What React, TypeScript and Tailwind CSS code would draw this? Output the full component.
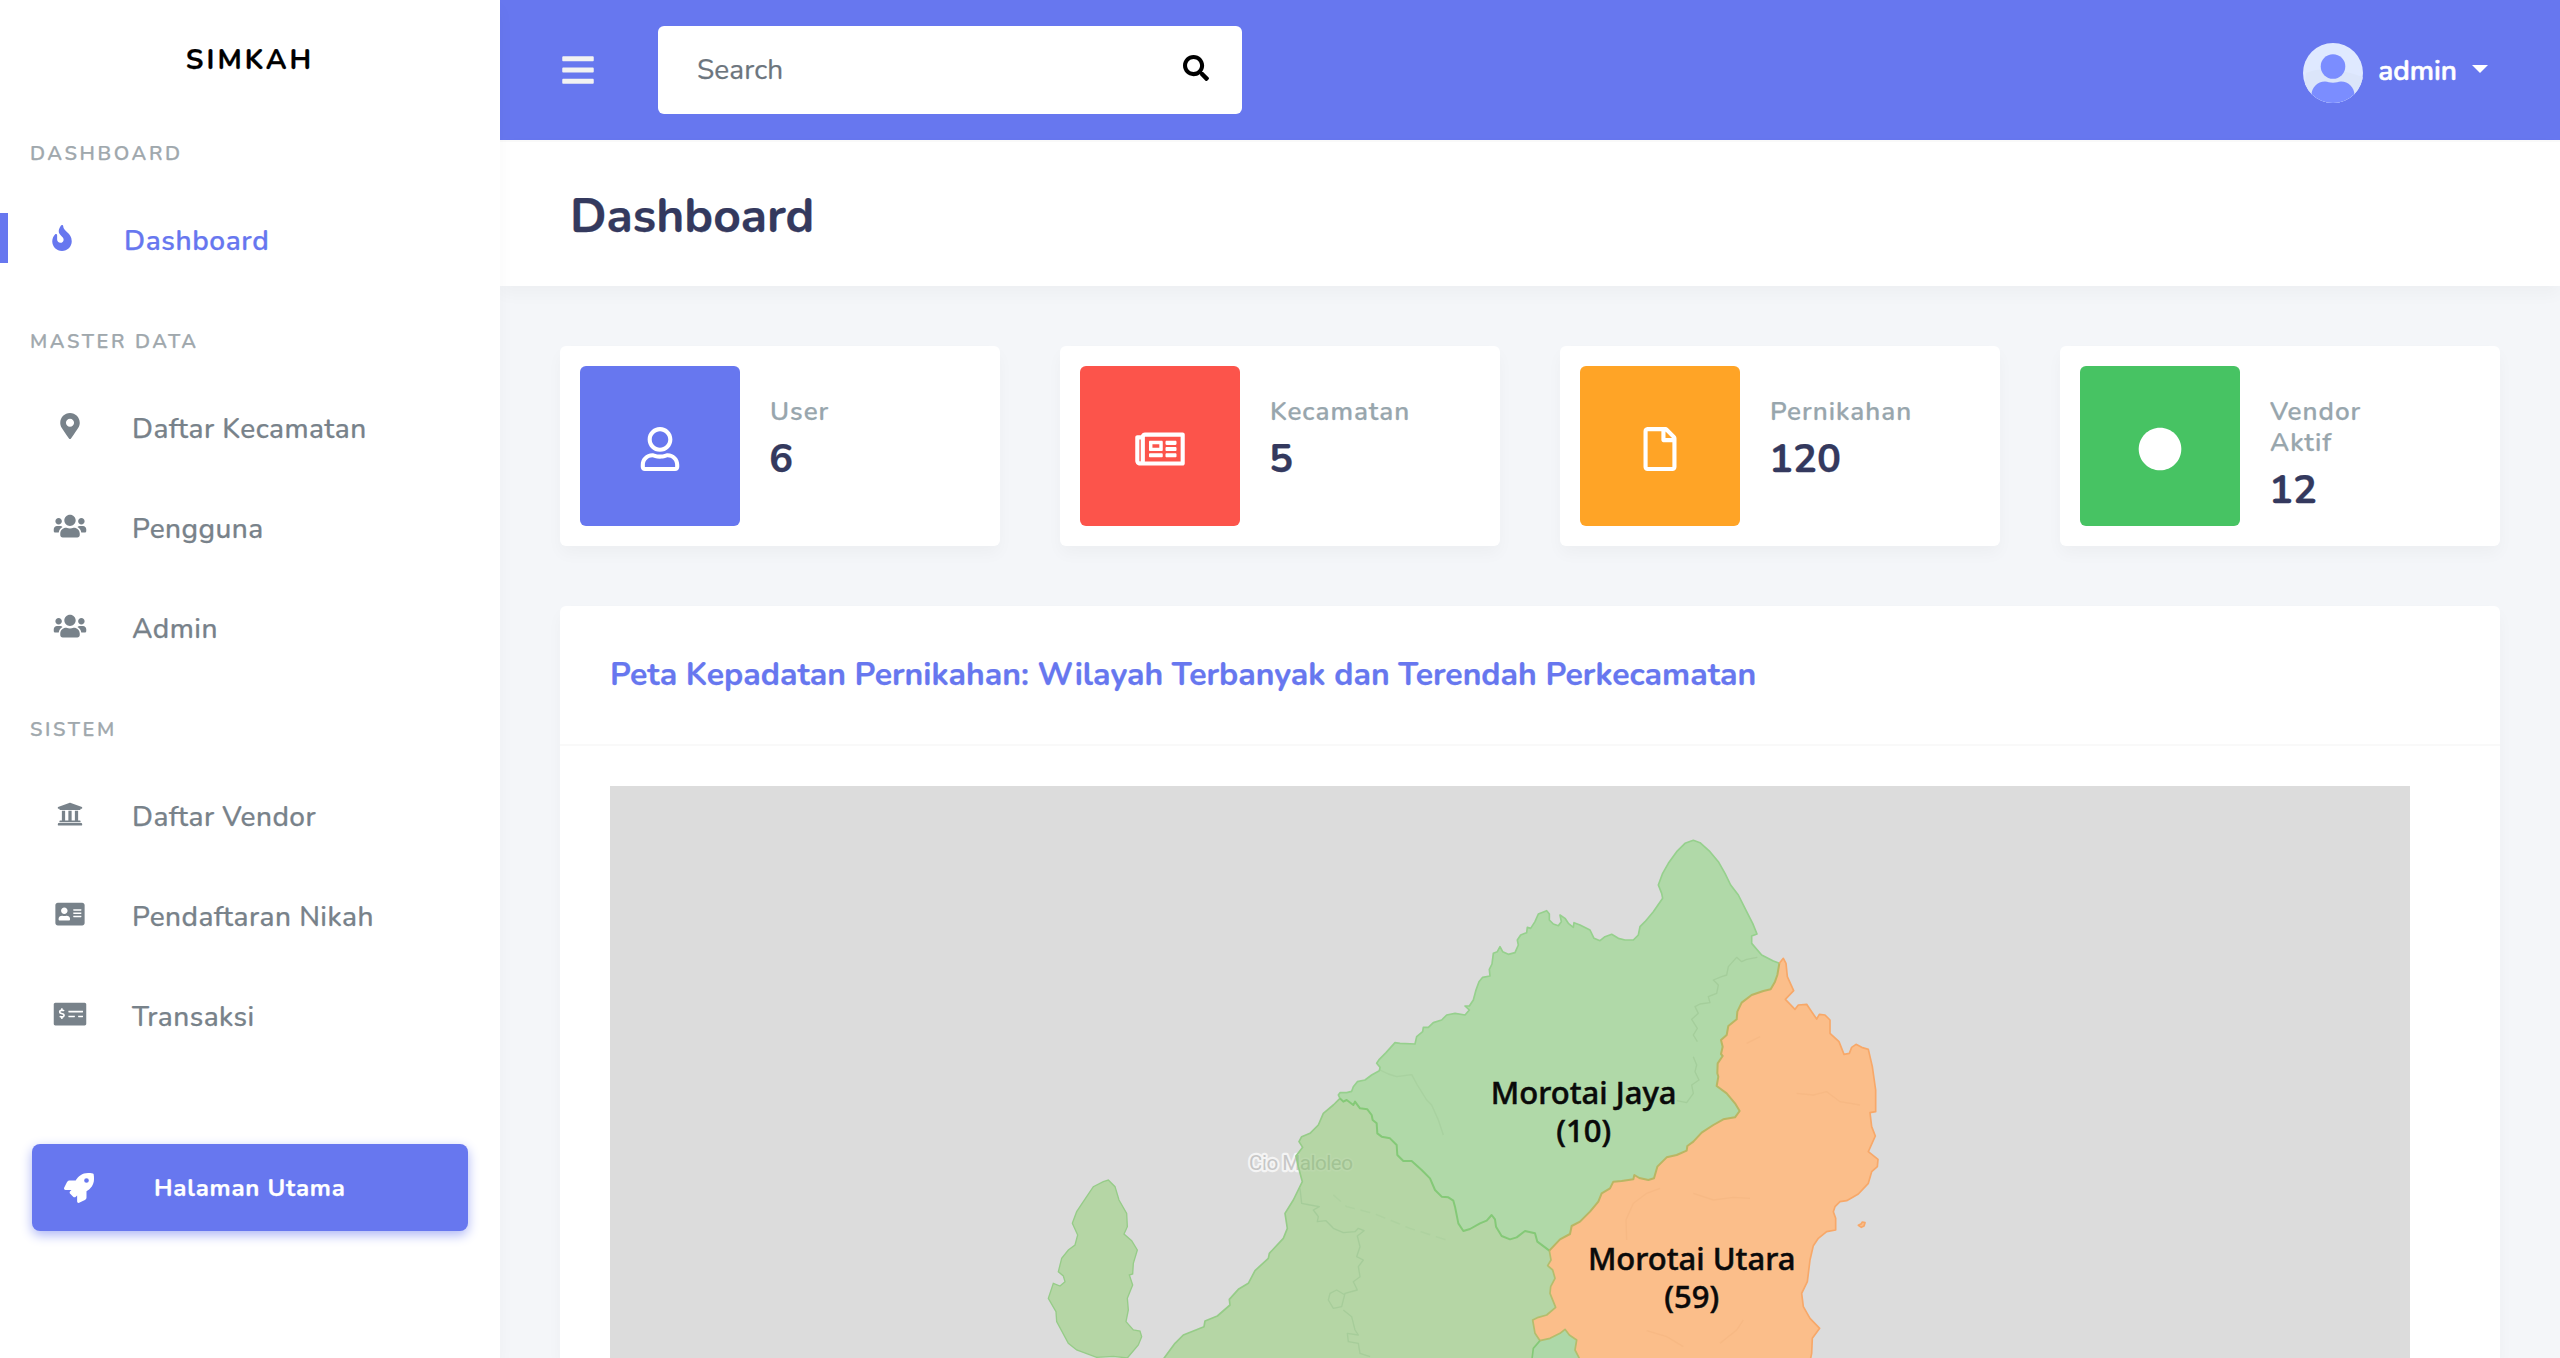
import React from "react";
import type { IconType } from "react-icons";
import {
  FaAddressCard,
  FaBars,
  FaCircle,
  FaFire,
  FaMapMarkerAlt,
  FaMoneyCheckAlt,
  FaRegFile,
  FaRegNewspaper,
  FaRegUser,
  FaRocket,
  FaSearch,
  FaUniversity,
  FaUsers,
} from "react-icons/fa";

type Item = { label: string; icon: IconType; active?: boolean };

const menu: { title: string; items: Item[] }[] = [
  { title: "DASHBOARD", items: [{ label: "Dashboard", icon: FaFire, active: true }] },
  {
    title: "MASTER DATA",
    items: [
      { label: "Daftar Kecamatan", icon: FaMapMarkerAlt },
      { label: "Pengguna", icon: FaUsers },
      { label: "Admin", icon: FaUsers },
    ],
  },
  {
    title: "SISTEM",
    items: [
      { label: "Daftar Vendor", icon: FaUniversity },
      { label: "Pendaftaran Nikah", icon: FaAddressCard },
      { label: "Transaksi", icon: FaMoneyCheckAlt },
    ],
  },
];

const stats: { label: string; value: string; icon: IconType; color: string }[] = [
  { label: "User", value: "6", icon: FaRegUser, color: "bg-[#6777ef]" },
  { label: "Kecamatan", value: "5", icon: FaRegNewspaper, color: "bg-[#fc544b]" },
  { label: "Pernikahan", value: "120", icon: FaRegFile, color: "bg-[#ffa426]" },
  { label: "Vendor Aktif", value: "12", icon: FaCircle, color: "bg-[#47c363]" },
];

function MenuItem({ label, icon: Icon, active }: Item) {
  if (active) {
    return (
      <a className="flex h-[100px] items-center text-[#6777ef]">
        <span className="h-[50px] w-2 bg-[#6777ef]" />
        <span className="flex w-[116px] justify-center pr-2">
          <Icon className="h-[26px] w-10" />
        </span>
        <span className="pt-[5px] text-[28px] font-semibold tracking-[0.6px]">{label}</span>
      </a>
    );
  }
  return (
    <a className="flex h-[100px] items-center text-[#78828a]">
      <span className="ml-[29px] flex w-[81px] justify-center">
        <Icon className="h-[26px] w-10" />
      </span>
      <span className="ml-[22px] pt-[5px] text-[28px] font-medium tracking-[0.46px]">{label}</span>
    </a>
  );
}

function Sidebar() {
  return (
    <aside className="relative z-10 flex w-[500px] shrink-0 flex-col bg-white shadow-[0_8px_16px_rgba(0,0,0,0.03)]">
      <div className="flex h-[120px] items-center justify-center text-[28px] font-bold tracking-[3px] text-black">
        SIMKAH
      </div>
      {menu.map((section, i) => (
        <div key={section.title} className={i ? "pt-5" : ""}>
          <div className="flex h-[68px] items-center pl-[30px] text-[20px] font-semibold tracking-[2.6px] text-[#a0a8ad]">
            {section.title}
          </div>
          {section.items.map((item) => (
            <MenuItem key={item.label} {...item} />
          ))}
        </div>
      ))}
      <a className="mx-8 mt-20 flex h-[87px] items-center rounded-lg bg-[#6777ef] text-white shadow-[0_4px_12px_#acb5f6]">
        <span className="flex w-[94px] justify-center">
          <FaRocket size={30} />
        </span>
        <span className="ml-7 text-[24px] font-bold tracking-[0.78px]">Halaman Utama</span>
      </a>
    </aside>
  );
}

function Avatar() {
  return (
    <svg width="60" height="60" viewBox="0 0 60 60">
      <defs>
        <clipPath id="avatar">
          <circle cx="30" cy="30" r="30" />
        </clipPath>
      </defs>
      <g clipPath="url(#avatar)">
        <rect width="60" height="60" fill="#dfe9ff" />
        <path d="M3 30C16 24 34 25 60 34V60H0Z" fill="#dbe5fa" />
        <circle cx="30" cy="23.5" r="12.3" fill="#7b8dff" />
        <path
          d="M8.500 60V52c0-7.500 6-13.500 13.500-13.500 3 0 4.500 1.300 8 1.300s5-1.300 8-1.300C45.500 38.500 51.500 44.500 51.500 52v8Z"
          fill="#7b8dff"
        />
      </g>
    </svg>
  );
}

function TopBar() {
  return (
    <header className="flex h-[140px] items-center bg-[#6777ef] pr-[72px] pl-[62px]">
      <FaBars className="mb-px h-9 w-8 text-[#f2f2f2]" />
      <div className="ml-16 flex h-[88px] w-[584px] items-center justify-between rounded-md bg-white pr-[33px] pl-[39px]">
        <span className="text-[28px] tracking-[0.1px] text-[#6c757d]">Search</span>
        <FaSearch size={26} className="mb-1 text-black" />
      </div>
      <div className="ml-auto flex items-center text-white">
        <div className="pt-1.5">
          <Avatar />
        </div>
        <span className="ml-[15px] pt-0.5 text-[28px] font-semibold [-webkit-text-stroke:0.6px]">admin</span>
        <span className="mb-0.5 ml-[15px] border-x-8 border-t-8 border-x-transparent border-t-white" />
      </div>
    </header>
  );
}

/* Reverses the order of the "x y" pairs in a list of points. */
function reversed(points: string) {
  return (points.match(/\S+ \S+/g) ?? []).reverse().join(" ");
}

const northCoast =
  "120 955 115 945 120 938 140 938 155 934 160 920 172 905 195 900 215 885 238 872 240 862 230 850 238 838 258 818 285 788 300 790 345 792 350 770 368 755 370 742 385 742 400 728 425 720 440 705 465 700 495 705 508 690 495 678 508 678 520 660 528 630 537 605 548 592 570 588 568 568 576 552 580 520 592 515 600 500 608 515 625 523 645 518 655 495 652 480 662 465 680 458 682 442 692 445 705 425 715 402 740 392 748 402 748 420 760 432 775 437 784 425 780 405 795 415 805 430 820 442 822 428 840 435 870 450 882 475 900 482 915 470 935 463 955 475 975 480 1000 480 1015 465 1020 440 1035 425 1060 395 1088 355 1085 340 1075 315 1088 280 1105 250 1130 215 1155 190 1180 181 1200 188 1230 215 1255 245 1275 280 1292 315 1315 345 1340 395 1358 430 1371 462 1355 468 1355 490 1385 525 1420 543 1438 550";
const jayaUtara =
  "1432 585 1425 605 1412 628 1390 633 1355 645 1325 668 1312 695 1310 718 1285 738 1280 765 1263 780 1268 800 1263 822 1268 828 1253 850 1252 880 1255 890 1250 918 1280 940 1305 970 1319 993 1305 1012 1270 1018 1240 1035 1205 1058 1180 1085 1162 1098 1160 1112 1130 1125 1100 1132 1072 1160 1062 1195 1045 1200 1018 1194 1003 1185 1000 1198 965 1203 940 1205 930 1225 905 1240 895 1265 870 1295 840 1325 815 1338 810 1362 780 1378 748 1412";
const jayaSelatan =
  "748 1412 712 1385 705 1360 675 1353 650 1372 630 1378 605 1368 588 1340 585 1318 575 1305 560 1322 540 1330 510 1347 490 1353 475 1330 465 1280 460 1262 445 1252 425 1250 405 1230 390 1195 365 1170 335 1143 310 1143 292 1125 290 1095 270 1075 245 1070 232 1060 230 1030 218 1020 215 1005 202 988 180 985 165 965 160 975 140 960 130 965 120 955";
const eastCoast =
  "1450 535 1458 550 1462 590 1481 632 1456 658 1485 688 1495 675 1520 673 1535 695 1550 717 1558 703 1575 705 1590 720 1590 760 1617 785 1632 823 1648 820 1655 802 1668 793 1685 802 1705 808 1717 860 1727 930 1727 995 1710 998 1715 1040 1726 1068 1705 1115 1734 1138 1732 1160 1715 1175 1705 1210 1675 1242 1640 1262 1620 1265 1605 1280 1600 1295 1607 1315 1607 1350 1580 1355 1555 1375 1540 1397 1530 1440 1522 1505 1505 1540 1510 1580 1530 1615 1559 1645 1537 1675 1535 1720 1530 1745";
const utaraSouth =
  "840 1745 838 1735 825 1710 830 1680 808 1665 795 1648 780 1660 750 1675 720 1682";
const utaraWest =
  "720 1682 705 1660 698 1620 715 1612 740 1605 767 1582 750 1540 752 1520 765 1495 758 1470 743 1457 753 1440 748 1412";
const westCoast =
  "120 955 100 975 70 1000 55 1035 30 1060 5 1070 -3 1085 8 1102 -12 1128 -5 1160 7 1205 -20 1260 -45 1300 -38 1345 -50 1375 -92 1420 -95 1435 -135 1472 -155 1510 -185 1528 -212 1558 -210 1575 -248 1608 -285 1623 -288 1640 -350 1665 -375 1690 -412 1740";
const island =
  "-575 1200 -555 1220 -543 1260 -520 1300 -518 1340 -528 1362 -505 1382 -488 1410 -500 1450 -502 1482 -512 1485 -502 1515 -518 1555 -515 1590 -522 1625 -500 1650 -480 1653 -475 1670 -485 1695 -518 1734 -560 1729 -610 1732 -670 1710 -695 1690 -730 1625 -732 1595 -755 1555 -740 1510 -720 1518 -705 1505 -710 1488 -725 1475 -715 1435 -695 1410 -675 1395 -667 1365 -683 1330 -670 1295 -640 1250 -620 1220 -590 1205";

/* Map of the sub-districts, drawn on a grid of three units to the pixel. */
function DistrictMap() {
  return (
    <svg width="1800" height="572" viewBox="-2070 18 5400 1716" className="block bg-[#dcdcdc]">
      <defs>
        <clipPath id="land">
          <path d={`M${jayaSelatan} ${westCoast} 748 1740Z`} />
        </clipPath>
      </defs>
      <text
        x="-153"
        y="1170"
        textLength="312"
        fontFamily="Roboto, sans-serif"
        fontSize="62"
        fill="#c6c6c6"
        stroke="#f4f4f4"
        strokeWidth="13"
        strokeLinejoin="round"
        paintOrder="stroke"
      >
        Cio Maloleo
      </text>
      <path d={`M${jayaSelatan} ${westCoast} 695 1745 ${utaraWest}Z`} fill="#b5d6a5" />
      <path d={`M${island}Z`} fill="#b5d6a5" stroke="#96cc88" strokeWidth="4" />
      <path d={`M${northCoast} ${jayaUtara} ${jayaSelatan}Z`} fill="#b0d9a8" />
      <path
        d={`M1438 550 ${eastCoast} ${utaraSouth} ${utaraWest} ${reversed(jayaUtara)}Z`}
        fill="#fbbe8a"
      />
      <path d={`M${reversed(utaraSouth)} 695 1745 700 1705Z`} fill="#add8a8" />
      <g clipPath="url(#land)">
        <text
          x="-153"
          y="1170"
          textLength="312"
          fontFamily="Roboto, sans-serif"
          fontSize="62"
          fill="#a2c394"
          stroke="#bad8ab"
          strokeWidth="10"
          strokeLinejoin="round"
          paintOrder="stroke"
        >
          Cio Maloleo
        </text>
      </g>
      <g fill="none" stroke="#9cc793" strokeWidth="4" strokeLinejoin="round" opacity="0.6">
        <path d="M1372 532 1340 538 1325 545 1310 532 1285 560 1280 585 1265 590 1240 600 1255 615 1250 640 1225 650 1230 668 1200 672 1185 680 1195 700 1175 718 1192 745 1180 765 1192 785 M1180 830 1190 855 1185 875 1197 900 1175 915 1180 940 1160 968 1130 962" />
        <path
          d="M240 870 265 882 290 890 335 884 352 915 380 960 395 975 415 1020 430 1065"
          strokeOpacity=".6"
        />
        <path d="M0 1225 5 1270 30 1275 58 1280 40 1290 55 1310 52 1325 78 1322 100 1345 130 1358 165 1355 175 1345 192 1352 172 1368 180 1400 170 1430 190 1440 175 1460 180 1490 160 1505 172 1530 135 1540 125 1580 100 1585 85 1560 90 1540 110 1530 135 1545 M130 1590 155 1610 165 1650 175 1665 142 1660 145 1685 175 1690 180 1720 210 1730" />
        <path
          d="M100 1245 140 1280 220 1300 330 1345 440 1380"
          strokeOpacity=".4"
          strokeDasharray="30 18"
        />
      </g>
      <g fill="none" stroke="#eeae78" strokeWidth="4" opacity="0.28">
        <path d="M980 1380 978 1320 1000 1270 1040 1240 1080 1225 M1180 1240 1240 1260 1300 1252 1350 1255" />
        <path d="M1490 940 1540 945 1580 935 1620 965 1680 975 M1340 790 1380 770 M1040 1652 1100 1670 1150 1700 M1260 1690 1310 1650 1330 1620" />
      </g>
      <g fill="none" strokeWidth="5" strokeLinejoin="round">
        <path d={`M${northCoast}`} stroke="#96d08d" />
        <path d={`M${westCoast}`} stroke="#96cc88" />
        <path d={`M${jayaSelatan}`} stroke="#84c977" strokeWidth="6" />
        <path d={`M${utaraWest}`} stroke="#b4bd6c" />
        <path d="M720 1682 700 1705 695 1745" stroke="#84c977" />
        <path d={`M1438 550 ${eastCoast}`} stroke="#f7a869" />
        <path d={`M1438 550 ${jayaUtara}`} stroke="#b9b663" strokeWidth="6" />
        <path d={`M${utaraSouth}`} stroke="#b4bd6c" />
        <path
          d="M1675 1336 1684 1331 1687 1326 1695 1328 1692 1338 1684 1342Z"
          fill="#fbbe8a"
          stroke="#f7a869"
        />
      </g>
      <g
        fontFamily="'Noto Sans', sans-serif"
        fontSize="93"
        fontWeight="500"
        textAnchor="middle"
        fill="#0a0a0a"
        stroke="#0a0a0a"
        strokeWidth="1.5"
      >
        <text x="851" y="971">Morotai Jaya</text>
        <text x="851" y="1087">(10)</text>
        <text x="1175" y="1469">Morotai Utara</text>
        <text x="1175" y="1585">(59)</text>
      </g>
    </svg>
  );
}

export default function App() {
  return (
    <div className="flex h-[1358px] w-[2560px] overflow-hidden bg-[#f4f6f9] font-['Nunito',sans-serif] leading-normal [-webkit-text-stroke:0.25px]">
      <Sidebar />
      <main className="flex flex-1 flex-col">
        <TopBar />
        <div className="flex h-[146px] shrink-0 items-center border-t-2 border-[#f9f9f9] bg-white pt-1 pl-[70px] shadow-[0_8px_16px_rgba(0,0,0,0.03)]">
          <h1 className="text-[48px] font-bold text-[#34395e]">Dashboard</h1>
        </div>
        <section className="grid grid-cols-4 gap-[60px] px-[60px] pt-[60px]">
          {stats.map(({ label, value, icon: Icon, color }) => (
            <article
              key={label}
              className="flex h-[200px] rounded-md bg-white p-5 shadow-[0_8px_16px_rgba(0,0,0,0.03)]"
            >
              <div
                className={`flex size-40 shrink-0 items-center justify-center rounded-md pt-[5px] text-white ${color}`}
              >
                <Icon className="h-11 w-[50px]" />
              </div>
              <div className="pt-[30px] pr-[60px] pl-[30px]">
                <h4 className="text-[26px] leading-[31px] font-semibold tracking-[1px] text-[#98a6ad]">
                  {label}
                </h4>
                <div className="-ml-px text-[40px] leading-[64px] font-bold text-[#34395e]">{value}</div>
              </div>
            </article>
          ))}
        </section>
        <section className="mx-[60px] mt-[60px] flex flex-col rounded-t-md bg-white shadow-[0_8px_16px_rgba(0,0,0,0.03)]">
          <div className="flex h-[140px] shrink-0 items-center border-b-2 border-[#f9f9f9] px-[50px]">
            <h4 className="text-[32px] font-bold whitespace-nowrap text-[#6777ef]">
              Peta Kepadatan Pernikahan: Wilayah Terbanyak dan Terendah Perkecamatan
            </h4>
          </div>
          <div className="px-[50px] pt-10">
            <DistrictMap />
          </div>
        </section>
      </main>
    </div>
  );
}
